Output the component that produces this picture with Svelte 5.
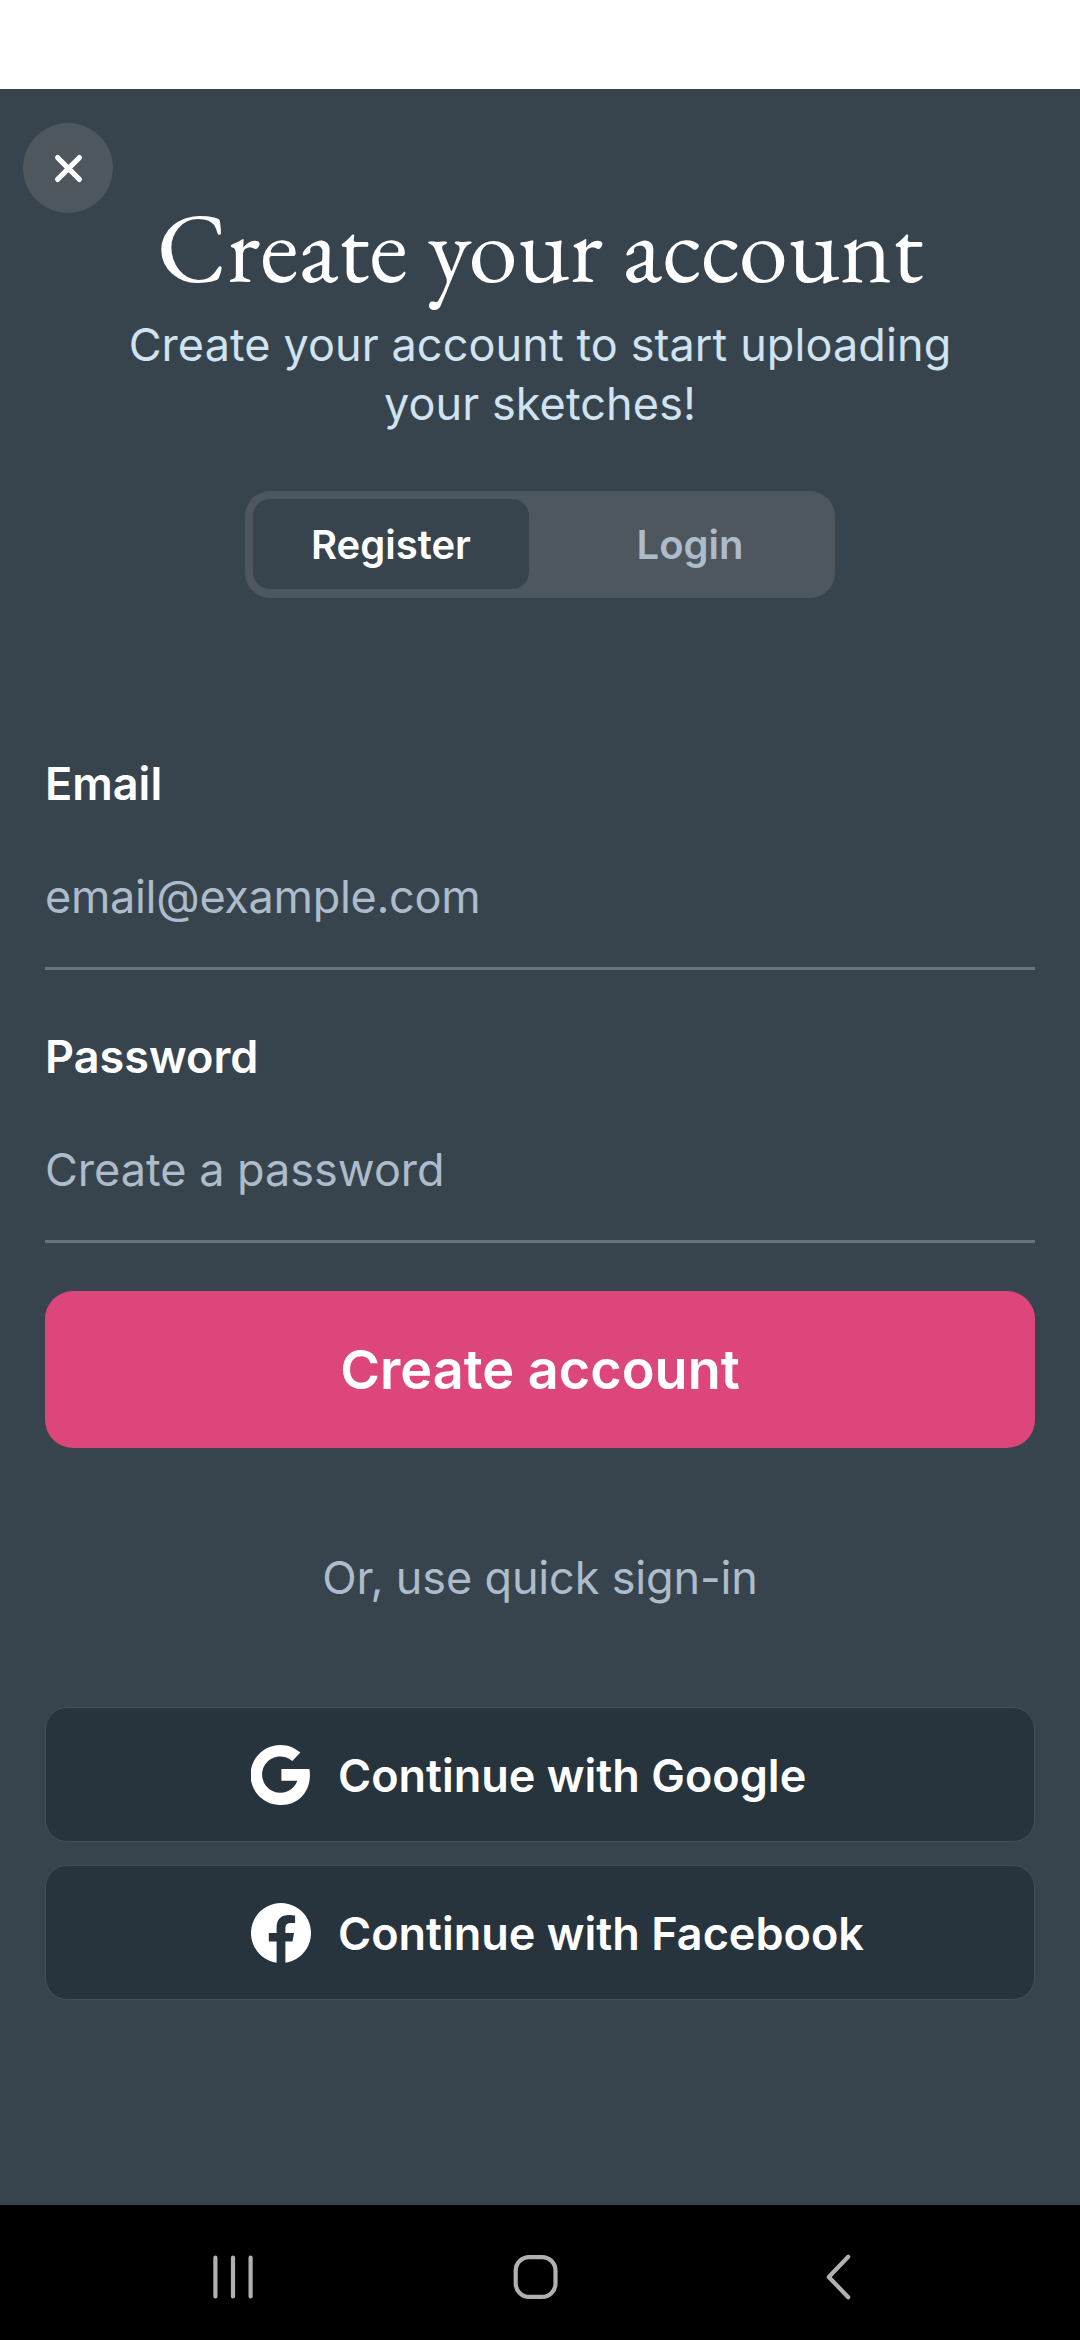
<script>
  let mode = $state('register');
</script>

<div class="screen">
  <div class="status"></div>
  <main>
    <button class="close" aria-label="Close">
      <svg viewBox="0 0 90 90"><path d="M34.6 34.6 56.4 56.4M56.4 34.6 34.6 56.4" /></svg>
    </button>
    <h1>Create your account</h1>
    <p class="sub">Create your account to start uploading<br />your sketches!</p>

    <div class="tabs">
      <button class:active={mode === 'register'} onclick={() => (mode = 'register')}>Register</button>
      <button class:active={mode === 'login'} onclick={() => (mode = 'login')}>Login</button>
    </div>

    <div class="form">
      <label class="field">
        <span>Email</span>
        <input class="email" type="email" placeholder="email@example.com" />
      </label>
      <label class="field">
        <span>Password</span>
        <input type="password" placeholder="Create a password" />
      </label>
    </div>

    <button class="submit">Create account</button>
    <p class="or">Or, use quick sign-in</p>

    <div class="providers">
      <button>
        <svg viewBox="0 0 60 60">
          <path d="M49.3 7.5 41.3 15.9A18.2 18.2 0 1 0 46.4 35.8H30.4V24H58.4C61.6 43.5 49.5 60 30.4 60A30 30 0 1 1 49.3 7.5Z" />
        </svg>
        <span>Continue with Google</span>
      </button>
      <button>
        <svg viewBox="0 0 60 60">
          <path d="M25.6 59.7V38.6H17.8V30H25.6V25C25.6 16.2 29.7 11.9 38.4 11.9C40.1 11.9 42.9 12.2 44.1 12.6V20.1H40.3C36.1 20.1 34.4 21.7 34.4 25.9V30H43L41.5 38.6H34.4V59.7A30 30 0 1 0 25.6 59.7Z" />
        </svg>
        <span>Continue with Facebook</span>
      </button>
    </div>
  </main>

  <nav>
    <svg viewBox="0 0 48 48"><path d="M6.4 4.5V43.5M24 4.5V43.5M41.6 4.5V43.5" /></svg>
    <svg viewBox="0 0 48 48"><rect x="2.7" y="4.1" width="39.8" height="39.8" rx="13.5" /></svg>
    <svg viewBox="0 0 48 48"><path d="M32.2 3.8 12.8 24 32.2 44.2" /></svg>
  </nav>
</div>

<style>
  :global(body) {
    background: #38444d;
  }
  .screen {
    width: 1080px;
    height: 2340px;
    display: flex;
    flex-direction: column;
    font-family: Inter, sans-serif;
    color: #fff;
    background: #38444d;
    overflow: hidden;
  }
  .status {
    height: 89px;
    background: #fff;
  }
  button {
    font: inherit;
    color: inherit;
    border: 0;
    padding: 0;
    margin: 0;
    cursor: pointer;
  }
  h1,
  p {
    margin: 0;
  }
  main {
    position: relative;
    flex: 1;
    padding: 103px 45px 0;
    display: flex;
    flex-direction: column;
  }
  .close {
    position: absolute;
    left: 23px;
    top: 34px;
    width: 90px;
    height: 90px;
    border-radius: 50%;
    background: #4e565e;
  }
  .close svg {
    display: block;
    fill: none;
    stroke: #fff;
    stroke-width: 5.2;
    stroke-linecap: round;
  }
  h1 {
    font: 400 99px/110px 'EB Garamond', 'Liberation Serif', serif;
    text-align: center;
  }
  .sub {
    margin-top: 13px;
    font-size: 45px;
    line-height: 59px;
    letter-spacing: 0.09px;
    text-align: center;
    color: #cfe3f0;
  }
  .tabs {
    align-self: center;
    margin-top: 58px;
    width: 590px;
    height: 107px;
    box-sizing: border-box;
    padding: 8px;
    display: grid;
    grid-template-columns: 1fr 1fr;
    gap: 22px;
    border-radius: 25px;
    background: #4e565e;
  }
  .tabs button {
    height: 90px;
    border-radius: 17px;
    font-size: 40px;
    font-weight: 600;
    color: #adbccb;
    background: none;
  }
  .tabs button:last-child {
    padding-left: 2px;
  }
  .tabs button.active {
    color: #fff;
    background: #38444d;
  }
  .form {
    margin-top: 158px;
    display: flex;
    flex-direction: column;
    gap: 59px;
  }
  .field {
    display: flex;
    flex-direction: column;
    gap: 57px;
    border-bottom: 3px solid #67737e;
    padding-bottom: 42px;
  }
  .field span {
    font-size: 45px;
    line-height: 56px;
    font-weight: 600;
  }
  input {
    font: 400 45px/56px Inter, sans-serif;
    height: 56px;
    padding: 0;
    border: 0;
    outline: 0;
    background: none;
    color: #fff;
  }
  input::placeholder {
    color: #adbccb;
    opacity: 1;
  }
  input.email {
    letter-spacing: -0.3px;
  }
  .submit {
    margin-top: 48px;
    height: 157px;
    border-radius: 28px;
    font-size: 54px;
    font-weight: 600;
    background: #dd467b;
  }
  .or {
    margin-top: 102px;
    font-size: 45px;
    line-height: 56px;
    letter-spacing: -0.15px;
    text-align: center;
    color: #adbccb;
  }
  .providers {
    margin-top: 101px;
    display: flex;
    flex-direction: column;
    gap: 23px;
  }
  .providers button {
    height: 135px;
    box-sizing: border-box;
    padding: 2px 0 0 205px;
    border: 1px solid #434f59;
    border-radius: 22px;
    display: flex;
    align-items: center;
    gap: 27px;
    font-size: 45px;
    font-weight: 600;
    background: #28343d;
  }
  .providers svg {
    width: 60px;
    height: 60px;
    margin-bottom: 1px;
    fill: #fff;
  }
  nav {
    height: 135px;
    display: flex;
    justify-content: space-between;
    align-items: center;
    padding: 9px 216px 0 209px;
    box-sizing: border-box;
    background: #000;
  }
  nav svg {
    width: 48px;
    height: 48px;
    fill: none;
    stroke: #b1b1b1;
    stroke-width: 4.2;
    stroke-linecap: round;
    stroke-linejoin: round;
  }
</style>
